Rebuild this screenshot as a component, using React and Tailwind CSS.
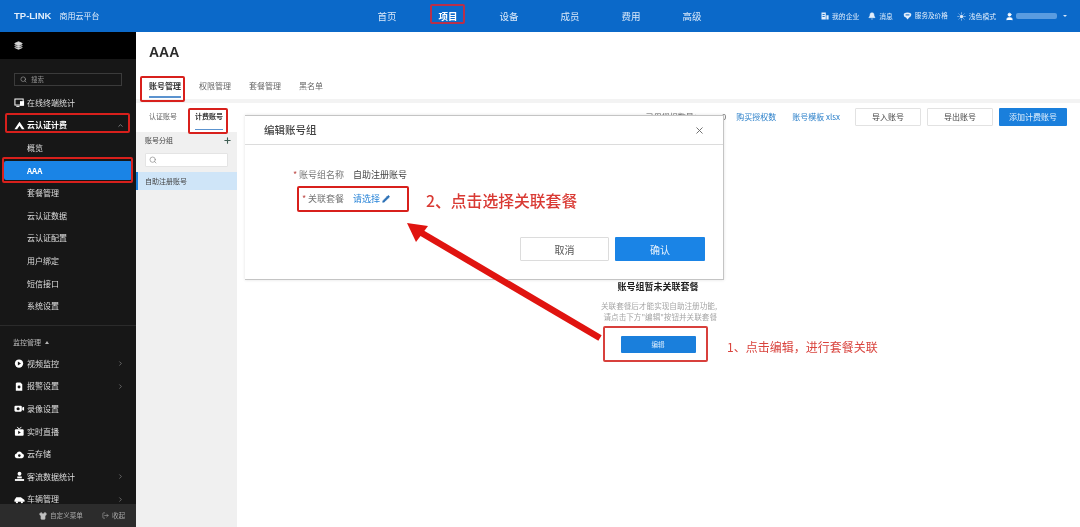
import React from "react";
import { Search, ChevronUp, ChevronRight, Plus, X, Pencil, Bell, Sun, User, Layers, Shirt, LogOut } from "lucide-react";

const font = { fontFamily: '"Noto Sans CJK SC", "Liberation Sans", sans-serif' };

const svgBase = { viewBox: "0 0 12 12", width: 11, height: 11, className: "mr-[2px] shrink-0" };
const IconAlpine = () => (
  <svg {...svgBase}><path d="M6 2 L11.5 10 H8.6 L6 6.2 L3.4 10 H0.5 Z" fill="#fff" /></svg>
);
const IconPlay = () => (
  <svg {...svgBase}><circle cx="5.5" cy="6" r="4.5" fill="#fff" /><path d="M4.2 3.8 L7.6 6 L4.2 8.2 Z" fill="#171717" /></svg>
);
const IconAlarm = () => (
  <svg {...svgBase}><path d="M3 1.5 H7 L9 3.5 V10.5 H2 V2.5 Z" fill="#fff" /><circle cx="5.5" cy="6.5" r="1.6" fill="#171717" /></svg>
);
const IconRecord = () => (
  <svg {...svgBase}><rect x="0.5" y="3" width="8" height="6.5" rx="1.2" fill="#fff" /><path d="M9 5 L11 4 V8.5 L9 7.5 Z" fill="#fff" /><circle cx="4.5" cy="6.2" r="1.7" fill="#171717" /></svg>
);
const IconLive = () => (
  <svg {...svgBase}><rect x="1" y="3.5" width="9.5" height="7" rx="1" fill="#fff" /><path d="M3.5 1 L5.7 3.5 L8 1" stroke="#fff" fill="none" strokeWidth="1" /><path d="M4.6 5.2 L7.4 7 L4.6 8.8 Z" fill="#171717" /></svg>
);
const IconCloud = () => (
  <svg {...svgBase}><path d="M3 10 A2.6 2.6 0 0 1 2.8 4.9 A3.2 3.2 0 0 1 8.8 4.9 A2.6 2.6 0 0 1 8.8 10 Z" fill="#fff" /><circle cx="5.8" cy="7.2" r="1.4" fill="#171717" /></svg>
);
const IconPeople = () => (
  <svg {...svgBase}><circle cx="6" cy="3" r="2.1" fill="#fff" /><path d="M3.5 6 H8.5 V8 H3.5 Z" fill="#fff" /><rect x="1" y="8.8" width="10" height="2" fill="#fff" /></svg>
);
const IconCar = () => (
  <svg {...svgBase}><path d="M0.5 8.5 V6.5 L2.5 3.5 H7.5 L10 5.5 L11.5 6.5 V8.5 Z" fill="#fff" /><circle cx="3.2" cy="9" r="1.2" fill="#fff" /><circle cx="8.6" cy="9" r="1.2" fill="#fff" /></svg>
);
const IconBuilding = () => (
  <svg width="8" height="8" viewBox="0 0 8 8"><path d="M0.5 0.5 H4.8 V7.5 H0.5 Z M5.4 3.2 H7.6 V7.5 H5.4 Z" fill="#e4effb" /><rect x="1.5" y="2" width="2.2" height="0.9" fill="#0b69c9" /><rect x="1.5" y="4" width="2.2" height="0.9" fill="#0b69c9" /></svg>
);
const IconBubble = () => (
  <svg width="9" height="8" viewBox="0 0 9 8"><path d="M1 1.5 Q4.5 -0.5 8 1.5 Q9 4 6.5 5.3 L4.5 7.6 L3 5.6 Q0 4.5 1 1.5 Z" fill="#e4effb" /><rect x="2.6" y="2.4" width="3.8" height="1" fill="#0b69c9" /></svg>
);
const IconMonitor = () => (
  <svg {...svgBase}><rect x="1" y="2.2" width="9" height="6.6" fill="none" stroke="#fff" strokeWidth="1.1" /><rect x="6.5" y="4.5" width="4.5" height="5" fill="#fff" /><path d="M2.5 10.4 H6" stroke="#fff" strokeWidth="1" /></svg>
);

function RedBox({ cls }) {
  return <div className={`absolute border-2 rounded-[2px] pointer-events-none ${cls}`} />;
}

function NavItem({ children, active }) {
  return <div className={`w-[61px] text-center text-[9.5px] ${active ? "text-white font-bold" : "text-[#dbe9f9]"}`}>{children}</div>;
}

function TopLink({ icon, children, cls, textCls }) {
  return (
    <div className={`flex items-center gap-[3px] text-[#e2eefb] ${cls || ""}`}>
      {icon}
      <span className={textCls || "text-[6.8px]"}>{children}</span>
    </div>
  );
}

function SideRow({ icon, children, arrow, sub, bold, up }) {
  return (
    <div className={`h-[22.6px] flex items-center text-[8px] shrink-0 ${sub ? "pl-[27px]" : "pl-[14px]"} pr-[12px] ${bold ? "text-white font-bold" : "text-[#dedede]"}`}>
      {icon}
      <span className="flex-1">{children}</span>
      {arrow && <ChevronRight size={7} className="text-[#9a9a9a]" />}
      {up && <ChevronUp size={7} className="text-[#b5b5b5]" />}
    </div>
  );
}

function Tab({ children, active }) {
  return (
    <div className={`h-[27px] flex items-center relative text-[8px] ${active ? "text-[#333] font-bold" : "text-[#666]"}`}>
      {children}
      {active && <div className="absolute left-0 right-0 bottom-[1px] h-[2px] bg-[#5b93cf]" />}
    </div>
  );
}

function SubTab({ children, active }) {
  return (
    <div className={`h-[27px] flex items-center relative text-[7px] ${active ? "text-[#333] font-bold" : "text-[#666]"}`}>
      {children}
      {active && <div className="absolute left-0 right-0 bottom-0 h-[1.5px] bg-[#5b93cf]" />}
    </div>
  );
}

function ToolBtn({ children, primary }) {
  return (
    <div className={`h-[18px] flex items-center justify-center text-[8px] rounded-[1px] ${primary ? "w-[68px] bg-[#1a7fdc] text-[#e4f1fd]" : "w-[66px] bg-white border border-[#e2e2e2] text-[#444]"}`}>
      {children}
    </div>
  );
}

export default function App() {
  return (
    <div className="relative w-full h-screen overflow-hidden flex flex-col bg-white blur-[0.35px]" style={font}>
      {/* top bar */}
      <header className="h-[32px] shrink-0 bg-[#0b69c9] flex items-center">
        <div className="w-[356.5px] pl-[14px] flex items-center gap-[8px]">
          <span className="text-[9.5px] font-bold text-[#e2eefb]" style={{ fontFamily: '"Liberation Sans", sans-serif' }}>TP-LINK</span>
          <span className="text-[8px] text-[#e2eefb]">商用云平台</span>
        </div>
        <nav className="flex">
          <NavItem>首页</NavItem>
          <NavItem active>项目</NavItem>
          <NavItem>设备</NavItem>
          <NavItem>成员</NavItem>
          <NavItem>费用</NavItem>
          <NavItem>高级</NavItem>
        </nav>
        <div className="flex-1 flex items-center justify-end pr-[13px]">
          <TopLink icon={<IconBuilding />} cls="mr-[9px]">我的企业</TopLink>
          <TopLink icon={<Bell size={8} fill="currentColor" strokeWidth={1.5} />} cls="mr-[10px]">消息</TopLink>
          <TopLink icon={<IconBubble />} cls="mr-[9px]" textCls="text-[6.6px]">服务及价格</TopLink>
          <TopLink icon={<Sun size={9} fill="currentColor" strokeWidth={1.5} />} cls="mr-[9px]">浅色模式</TopLink>
          <User size={9} className="text-white mr-[2px]" fill="currentColor" />
          <div className="w-[41px] h-[6px] bg-[#5a9ce0] rounded-[2px] mr-[6px]" />
          <div className="w-0 h-0 border-l-[2px] border-r-[2px] border-t-[2px] border-l-transparent border-r-transparent border-t-[#d4e5f8]" />
        </div>
      </header>

      <div className="flex-1 flex min-h-0">
        {/* sidebar */}
        <aside className="w-[136px] shrink-0 bg-[#171717] flex flex-col overflow-hidden">
          <div className="h-[27px] bg-black shrink-0 flex items-center pl-[14px]">
            <Layers size={9} className="text-[#d5d5d5]" fill="currentColor" />
          </div>
          <div className="flex-1 min-h-0 overflow-hidden">
            <div className="mx-[14px] mt-[14px] h-[13px] border border-[#3b3b3b] flex items-center pl-[5px] gap-[4px] text-[6.5px] text-[#8f8f8f]">
              <Search size={7} className="text-[#aaa]" />搜索
            </div>
            <div className="mt-[5.5px]">
              <SideRow icon={<IconMonitor />}>在线终端统计</SideRow>
              <SideRow icon={<IconAlpine />} bold up>云认证计费</SideRow>
              <SideRow sub>概览</SideRow>
              <div className="h-[22.6px] flex items-center px-[4px]">
                <div className="w-full h-[19px] bg-[#1a84e6] rounded-[2px] pl-[23px] flex items-center text-[8px] font-bold text-white">AAA</div>
              </div>
              <SideRow sub>套餐管理</SideRow>
              <SideRow sub>云认证数据</SideRow>
              <SideRow sub>云认证配置</SideRow>
              <SideRow sub>用户绑定</SideRow>
              <SideRow sub>短信接口</SideRow>
              <SideRow sub>系统设置</SideRow>
            </div>
            <div className="mt-[8px] border-t border-[#2b2b2b] h-[27px] pl-[13px] flex items-center gap-[4px] text-[7px] text-[#b8b8b8] shrink-0 pt-[6px]">
              监控管理
              <div className="w-0 h-0 border-l-[2.5px] border-r-[2.5px] border-b-[3px] border-l-transparent border-r-transparent border-b-[#b5b5b5]" />
            </div>
            <SideRow icon={<IconPlay />} arrow>视频监控</SideRow>
            <SideRow icon={<IconAlarm />} arrow>报警设置</SideRow>
            <SideRow icon={<IconRecord />}>录像设置</SideRow>
            <SideRow icon={<IconLive />}>实时直播</SideRow>
            <SideRow icon={<IconCloud />}>云存储</SideRow>
            <SideRow icon={<IconPeople />} arrow>客流数据统计</SideRow>
            <SideRow icon={<IconCar />} arrow>车辆管理</SideRow>
          </div>
          <div className="h-[23px] shrink-0 bg-[#2c2c2c] flex items-center text-[6.6px] text-[#a8a8a8] pl-[39px]">
            <Shirt size={8} fill="currentColor" className="mr-[3px] text-[#c0c0c0]" />
            <span className="w-[52px]">自定义菜单</span>
            <LogOut size={7} className="mr-[3px]" />
            <span>收起</span>
          </div>
        </aside>

        {/* main */}
        <main className="flex-1 min-w-0 flex flex-col">
          <div className="h-[40px] shrink-0 pl-[13px] flex items-center text-[14px] font-bold text-[#2b2b2b]" style={{ fontFamily: '"Liberation Sans", sans-serif' }}>AAA</div>
          <div className="h-[27px] shrink-0 pl-[13px] flex gap-[18px]">
            <Tab active>账号管理</Tab>
            <Tab>权限管理</Tab>
            <Tab>套餐管理</Tab>
            <Tab>黑名单</Tab>
          </div>
          <div className="h-[4px] shrink-0 bg-[#f3f3f3]" />
          <div className="h-[29px] shrink-0 pl-[13px] pr-[13px] flex items-start gap-[18px]">
            <SubTab>认证账号</SubTab>
            <SubTab active>计费账号</SubTab>
            <div className="flex-1 h-[27px] flex items-center justify-end text-[8px]">
              <span className="text-[#666] mr-[20px]">已用授权数量：</span>
              <span className="text-[#666] mr-[10px]">0</span>
              <span className="text-[#2a7fc9] mr-[16px]">购买授权数</span>
              <span className="text-[#2a7fc9] mr-[15px]">账号模板 xlsx</span>
              <div className="flex gap-[6px]">
                <ToolBtn>导入账号</ToolBtn>
                <ToolBtn>导出账号</ToolBtn>
                <ToolBtn primary>添加计费账号</ToolBtn>
              </div>
            </div>
          </div>
          <div className="flex-1 flex min-h-0">
            <div className="w-[101px] shrink-0 bg-[#f0f0f0]">
              <div className="h-[16px] mb-[5px] flex items-center justify-between pl-[9px] pr-[5px] text-[7px] text-[#444]">
                账号分组
                <Plus size={9} strokeWidth={3} className="text-[#3f5e54]" />
              </div>
              <div className="mx-[9px] h-[14px] bg-white border border-[#e4e4e4] rounded-[1px] flex items-center pl-[3px]">
                <Search size={8} className="text-[#888]" />
              </div>
              <div className="mt-[5px] h-[18px] bg-[#cfe5f8] border-l-2 border-[#1a7fdc] pl-[7px] flex items-center text-[7px] text-[#444]">自助注册账号</div>
            </div>
            <div className="flex-1 min-w-0 pl-[331px]">
              <div className="w-[180px] flex flex-col items-center pt-[148px]">
                <div className="text-[9px] font-bold text-[#222] leading-[14px]">账号组暂未关联套餐</div>
                <div className="mt-[6px] w-[122px] mr-[4px] text-right text-[7.6px] leading-[11px] text-[#a5a5a5] whitespace-nowrap">
                  <div>关联套餐后才能实现自助注册功能,</div>
                  <div>请点击下方"编辑"按钮并关联套餐</div>
                </div>
                <div className="mt-[14px] w-[75px] h-[17px] bg-[#1a7fdc] rounded-[1px] flex items-center justify-center text-[6.5px] text-[#d9ecfd]">编辑</div>
              </div>
            </div>
          </div>
        </main>
      </div>

      {/* modal */}
      <div className="absolute left-[245px] top-[115px] w-[479px] h-[165px] bg-white border border-[#c4c4c4] border-l-0 shadow-[0_0_3px_rgba(0,0,0,0.12)] flex flex-col">
        <div className="h-[29px] shrink-0 border-b border-[#dcdcdc] flex items-center justify-between pl-[19px] pr-[18px]">
          <span className="text-[10.5px] font-medium text-[#444]">编辑账号组</span>
          <X size={11} className="text-[#666]" />
        </div>
        <div className="pl-[48px] pt-[23px] text-[9px] text-[#777] flex-1">
          <div className="flex items-center h-[14px]">
            <span className="text-[#c0504d] w-[6px]">*</span>
            <span className="w-[54px]">账号组名称</span>
            <span className="text-[#444]">自助注册账号</span>
          </div>
          <div className="flex items-center h-[14px] mt-[10px] pl-[9px]">
            <span className="text-[#c0504d] w-[6px]">*</span>
            <span className="w-[45px]">关联套餐</span>
            <span className="text-[#2a85d8]">请选择</span>
            <Pencil size={8} className="text-[#2a6fb5] ml-[2px]" fill="currentColor" />
          </div>
        </div>
        <div className="flex justify-end gap-[6px] pr-[18px] pb-[18px]">
          <div className="w-[89px] h-[24px] border border-[#dcdcdc] rounded-[1px] flex items-center justify-center text-[10px] text-[#555]">取消</div>
          <div className="w-[90px] h-[24px] bg-[#1a84e6] rounded-[1px] flex items-center justify-center text-[10px] text-[#e4f1fd]">确认</div>
        </div>
      </div>

      {/* annotations */}
      <RedBox cls="left-[430px] top-[4px] w-[35px] h-[20px] border-[#b8304a]" />
      <RedBox cls="left-[140px] top-[76px] w-[45px] h-[26px] border-[#d8201c]" />
      <RedBox cls="left-[188px] top-[108px] w-[40px] h-[26px] border-[#d8201c]" />
      <RedBox cls="left-[5px] top-[113px] w-[125px] h-[20px] border-[#d8201c]" />
      <RedBox cls="left-[2px] top-[157px] w-[131px] h-[26px] border-[#d8201c]" />
      <RedBox cls="left-[297px] top-[186px] w-[112px] h-[26px] border-[#d8201c]" />
      <RedBox cls="left-[603px] top-[326px] w-[105px] h-[36px] border-[#d8403c]" />
      <div className="absolute left-[426px] top-[190px] text-[15.8px] leading-[22px] font-medium text-[#d93a34]">2、点击选择关联套餐</div>
      <div className="absolute left-[727px] top-[338px] text-[12px] leading-[18px] text-[#d9443e]">1、点击编辑，进行套餐关联</div>
      <svg className="absolute inset-0 pointer-events-none" width="1080" height="527">
        <line x1="600" y1="338" x2="420" y2="232" stroke="#e01410" strokeWidth="6.5" />
        <polygon points="407,223 428,226 416,242" fill="#e01410" />
      </svg>
    </div>
  );
}
